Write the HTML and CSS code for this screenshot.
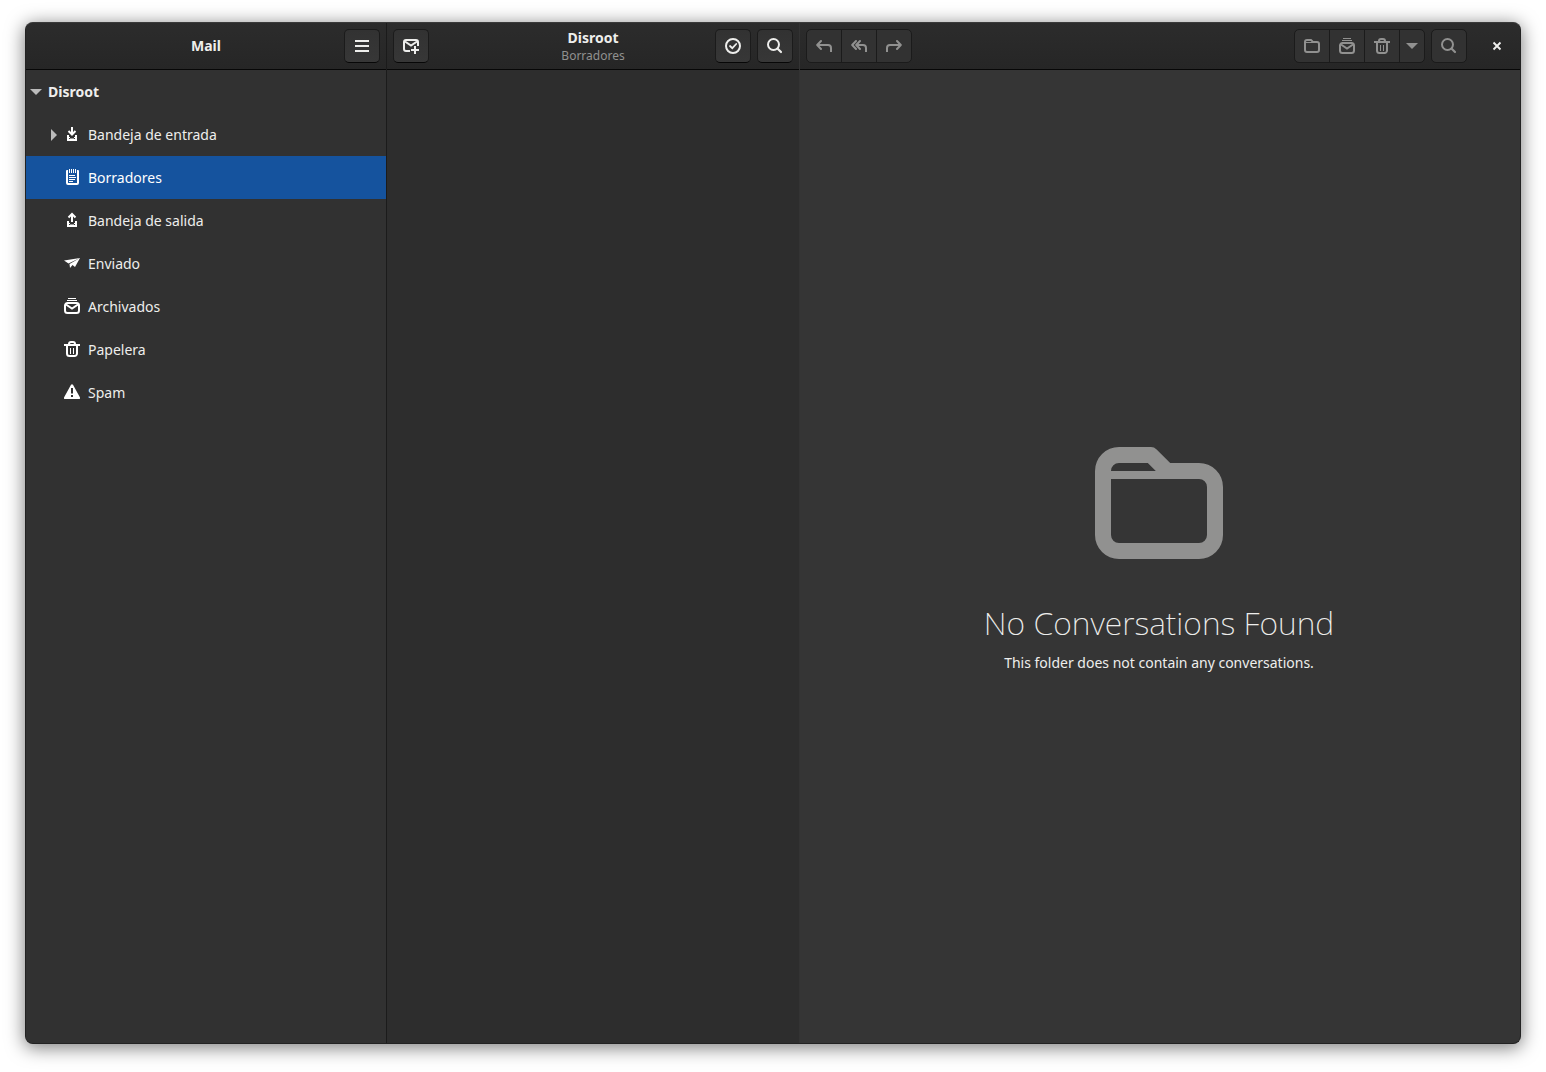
FILE: index.html
```html
<!DOCTYPE html>
<html lang="es">
<head>
<meta charset="utf-8">
<meta name="viewport" content="width=device-width, initial-scale=1">
<title>Mail</title>
<link rel="stylesheet" href="styles.css">
</head>
<body>
<svg class="symbols" aria-hidden="true">
  <symbol id="folder" viewBox="0 0 16 16"><path fill-rule="evenodd" d="M0 4a3 3 0 0 1 3-3h4q.4 0 .7.3L9.400 3H13a3 3 0 0 1 3 3v6a3 3 0 0 1-3 3H3a3 3 0 0 1-3-3zM2 5v7a1 1 0 0 0 1 1h10a1 1 0 0 0 1-1V6a1 1 0 0 0-1-1zM3 3a1 1 0 0 0-1 1h5.600l-1-1z"/></symbol>
  <symbol id="archive" viewBox="0 0 16 16"><path d="M4 0h8v1H4zM3 2h10v1H3z"/><path fill="none" stroke="currentColor" stroke-width="2" d="M3.500 5h9A2.500 2.500 0 0 1 15 7.500v5a2.500 2.500 0 0 1-2.500 2.500h-9A2.500 2.500 0 0 1 1 12.500v-5A2.500 2.500 0 0 1 3.500 5z"/><path fill="none" stroke="currentColor" stroke-width="2" d="M2 6.500l6 4 6-4"/></symbol>
  <symbol id="trash" viewBox="0 0 16 16"><path fill="none" stroke="currentColor" stroke-width="2" d="M0 4h16M3 4v8.500A2.500 2.500 0 0 0 5.500 15h5a2.500 2.500 0 0 0 2.500-2.500V4M5 4V3a2 2 0 0 1 2-2h2a2 2 0 0 1 2 2v1"/><path d="M6 7h1v6H6zM9 7h1v6H9z"/></symbol>
  <symbol id="search" viewBox="0 0 16 16"><circle cx="6.500" cy="6.500" r="5.500" fill="none" stroke="currentColor" stroke-width="2"/><path fill="none" stroke="currentColor" stroke-width="2.200" stroke-linecap="round" d="M10.700 10.700L14 14"/></symbol>
  <symbol id="reply" viewBox="0 0 16 16"><path fill="none" stroke="currentColor" stroke-width="2" stroke-linecap="round" stroke-linejoin="round" d="M5 3L1.200 7 5 11"/><path fill="none" stroke="currentColor" stroke-width="2" d="M2 7h10a3 3 0 0 1 3 3v4"/></symbol>
  <symbol id="reply-all" viewBox="0 0 16 16"><path fill="none" stroke="currentColor" stroke-width="2" stroke-linecap="round" stroke-linejoin="round" d="M5 3L1.200 7 5 11M9 3L5.200 7 9 11"/><path fill="none" stroke="currentColor" stroke-width="2" d="M6 7h6a3 3 0 0 1 3 3v4"/></symbol>
  <symbol id="forward" viewBox="0 0 16 16"><path fill="none" stroke="currentColor" stroke-width="2" stroke-linecap="round" stroke-linejoin="round" d="M11 3l3.800 4L11 11"/><path fill="none" stroke="currentColor" stroke-width="2" d="M14 7H4a3 3 0 0 0-3 3v4"/></symbol>
  <symbol id="tray" viewBox="0 0 16 16"><path fill-rule="evenodd" d="M3 9h2v2h1v1h4v-1h1V9h2v6H3zM5 12v1h6v-1h-1v.5H6V12z"/></symbol>
</svg>

<div class="window">
  <section class="pane sidebar">
    <header class="bar">
      <div class="heading"><h1 class="title">Mail</h1></div>
      <button class="btn" type="button" aria-label="Menú"><svg class="icon" viewBox="0 0 16 16"><path d="M1 2h14v2H1zM1 7h14v2H1zM1 12h14v2H1z"/></svg></button>
    </header>
    <nav class="tree" aria-label="Carpetas">
      <a class="account" href="#cuenta"><svg class="arrow" viewBox="0 0 12 12"><path d="M0 3h12L6 9z"/></svg>Disroot</a>
      <a class="row" href="#entrada"><svg class="arrow" viewBox="0 0 12 12"><path d="M3 0v12l6-6z"/></svg><svg class="icon" viewBox="0 0 16 16"><path fill="none" stroke="currentColor" stroke-width="2" d="M8 1v7M4.500 5L8 8.500 11.500 5"/><use href="#tray"/></svg>Bandeja de entrada</a>
      <a class="row selected" href="#borradores" aria-current="page"><span class="arrow"></span><svg class="icon" viewBox="0 0 16 16"><path d="M2 2q0-1 1-1h1v13h9V1h1q1 0 1 1v12q0 2-2 2H4q-2 0-2-2z"/><path d="M5 0h1v4H5zM7 0h1v4H7zM9 0h1v4H9zM11 0h1v4h-1zM5 6h6v1H5zM5 8h7v1H5zM5 10h6v1H5zM5 12h4v1H5z"/></svg>Borradores</a>
      <a class="row" href="#salida"><span class="arrow"></span><svg class="icon" viewBox="0 0 16 16"><path fill="none" stroke="currentColor" stroke-width="2" d="M8 2v8M4.500 5.500L8 2l3.500 3.500"/><use href="#tray"/></svg>Bandeja de salida</a>
      <a class="row" href="#enviado"><span class="arrow"></span><svg class="icon" viewBox="0 0 16 16"><path d="M0 5.500L16 3 4.500 8.500zM5.500 9L16 3l-5 9-2.500-2L6 13z"/></svg>Enviado</a>
      <a class="row" href="#archivados"><span class="arrow"></span><svg class="icon"><use href="#archive"/></svg>Archivados</a>
      <a class="row" href="#papelera"><span class="arrow"></span><svg class="icon"><use href="#trash"/></svg>Papelera</a>
      <a class="row" href="#spam"><span class="arrow"></span><svg class="icon" viewBox="0 0 16 16"><path fill-rule="evenodd" d="M7 .8q1-1.300 2 0l7 12.700q.3 1.500-1 1.500H1q-1.300 0-1-1.500zM7 4v5.500h2V4zM7 11v2h2v-2z"/></svg>Spam</a>
    </nav>
  </section>

  <section class="pane list">
    <header class="bar">
      <button class="btn" type="button" aria-label="Redactar"><svg class="icon" viewBox="0 0 16 16"><path fill="none" stroke="currentColor" stroke-width="2" d="M7 13H3a2 2 0 0 1-2-2V4a2 2 0 0 1 2-2h10a2 2 0 0 1 2 2v4"/><path fill="none" stroke="currentColor" stroke-width="2" d="M2 3.500l6 4 6-4"/><path d="M11 8h2v3h3v2h-3v3h-2v-3H8v-2h3z"/></svg></button>
      <div class="heading"><h2 class="title">Disroot</h2><p class="subtitle">Borradores</p></div>
      <button class="btn" type="button" aria-label="Seleccionar"><svg class="icon" viewBox="0 0 16 16"><circle cx="8" cy="8" r="7" fill="none" stroke="currentColor" stroke-width="2"/><path fill="none" stroke="currentColor" stroke-width="1.800" stroke-linecap="round" d="M5 8l2.300 2.200L11.200 6"/></svg></button>
      <button class="btn" type="button" aria-label="Buscar"><svg class="icon"><use href="#search"/></svg></button>
    </header>
  </section>

  <main class="pane viewer">
    <header class="bar">
      <div class="group">
        <button class="btn" type="button" disabled aria-label="Responder"><svg class="icon"><use href="#reply"/></svg></button>
        <button class="btn" type="button" disabled aria-label="Responder a todos"><svg class="icon"><use href="#reply-all"/></svg></button>
        <button class="btn" type="button" disabled aria-label="Reenviar"><svg class="icon"><use href="#forward"/></svg></button>
      </div>
      <div class="group end">
        <button class="btn" type="button" disabled aria-label="Mover"><svg class="icon"><use href="#folder"/></svg></button>
        <button class="btn" type="button" disabled aria-label="Archivar"><svg class="icon"><use href="#archive"/></svg></button>
        <button class="btn" type="button" disabled aria-label="Eliminar"><svg class="icon"><use href="#trash"/></svg></button>
        <button class="btn narrow" type="button" disabled aria-label="Más acciones"><svg class="arrow" viewBox="0 0 12 12"><path d="M0 3h12L6 9z"/></svg></button>
      </div>
      <button class="btn" type="button" disabled aria-label="Buscar en la conversación"><svg class="icon"><use href="#search"/></svg></button>
      <button class="close" type="button" aria-label="Cerrar"><svg class="icon" viewBox="0 0 16 16"><path fill="none" stroke="currentColor" stroke-width="2.200" d="M4 4l8 8M12 4l-8 8"/></svg></button>
    </header>
    <div class="empty">
      <svg class="picture"><use href="#folder"/></svg>
      <h2 class="empty-title">No Conversations Found</h2>
      <p class="empty-text">This folder does not contain any conversations.</p>
    </div>
  </main>
</div>
</body>
</html>
```
FILE: styles.css
```css
* {
  box-sizing: border-box;
}

body {
  margin: 0;
  min-height: 100vh;
  display: flex;
  padding: 22px 25px 28px;
  background: #fff;
  color: #eeeeec;
  font: 14px/20px "Noto Sans", "Open Sans", sans-serif;
}

h1, h2, p {
  margin: 0;
}

.symbols {
  display: none;
}

.window {
  flex: 1;
  display: flex;
  overflow: hidden;
  border: 1px solid #222;
  border-top-color: #3a3a3a;
  border-radius: 8px;
  background: #353535;
  box-shadow: 0 3px 18px 1px rgba(0, 0, 0, .5);
}

.pane {
  display: flex;
  flex-direction: column;
}

.sidebar {
  flex: 0 0 361px;
  border-right: 1px solid #1b1b1b;
  background: #313131;
}

.list {
  flex: 0 0 413px;
  border-right: 1px solid #333;
  background: #2d2d2d;
}

.viewer {
  flex: 1;
  min-width: 0;
}

.bar {
  display: flex;
  align-items: center;
  gap: 6px;
  height: 47px;
  padding: 0 6px;
  border-bottom: 1px solid #070707;
  background: linear-gradient(#2c2c2c, #262626);
}

.heading {
  flex: 1;
  padding-left: 42px;
  text-align: center;
}

.title {
  font-size: 14px;
  line-height: 20px;
  font-weight: 700;
}

.subtitle {
  font-size: 12px;
  line-height: 16px;
  color: #919190;
}

.btn {
  display: flex;
  align-items: center;
  justify-content: center;
  width: 36px;
  height: 34px;
  padding: 0;
  border: 1px solid #1b1b1b;
  border-bottom-color: #070707;
  border-radius: 5px;
  background: linear-gradient(#323232, #373737);
  color: #eeeeec;
}

.btn:disabled {
  border-color: #1b1b1b;
  background: #323232;
  color: #919190;
}

.narrow {
  width: 26px;
}

.group {
  display: flex;
}

.group .btn + .btn {
  margin-left: -1px;
  border-top-left-radius: 0;
  border-bottom-left-radius: 0;
}

.group .btn:not(:last-child) {
  border-top-right-radius: 0;
  border-bottom-right-radius: 0;
}

.end {
  margin-left: auto;
}

.close {
  display: flex;
  align-items: center;
  justify-content: center;
  width: 34px;
  height: 34px;
  margin: 0 0 0 7px;
  padding: 0;
  border: 0;
  background: none;
  color: #eeeeec;
}

.icon {
  flex: none;
  width: 16px;
  height: 16px;
  fill: currentColor;
}

.arrow {
  flex: none;
  width: 12px;
  height: 12px;
  fill: #bbb;
}

.btn .arrow {
  fill: currentColor;
}

.close .icon {
  width: 14px;
  height: 14px;
}

.account,
.row {
  display: flex;
  align-items: center;
  height: 43px;
  color: inherit;
  text-decoration: none;
}

.account {
  gap: 6px;
  padding-left: 4px;
  font-weight: 700;
}

.row {
  gap: 8px;
  padding-left: 22px;
}

.row .icon {
  margin: 0 0 2px -4px;
  color: #fff;
}

.selected {
  background: #15539e;
  color: #fff;
}

.empty {
  flex: 1;
  display: flex;
  flex-direction: column;
  align-items: center;
  justify-content: center;
  padding: 0 2px 2px 0;
}

.picture {
  width: 128px;
  height: 128px;
  fill: #919190;
}

.empty-title {
  margin-top: 36px;
  font-size: 32px;
  line-height: 40px;
  font-weight: 200;
}

.empty-text {
  margin-top: 10px;
}
```
